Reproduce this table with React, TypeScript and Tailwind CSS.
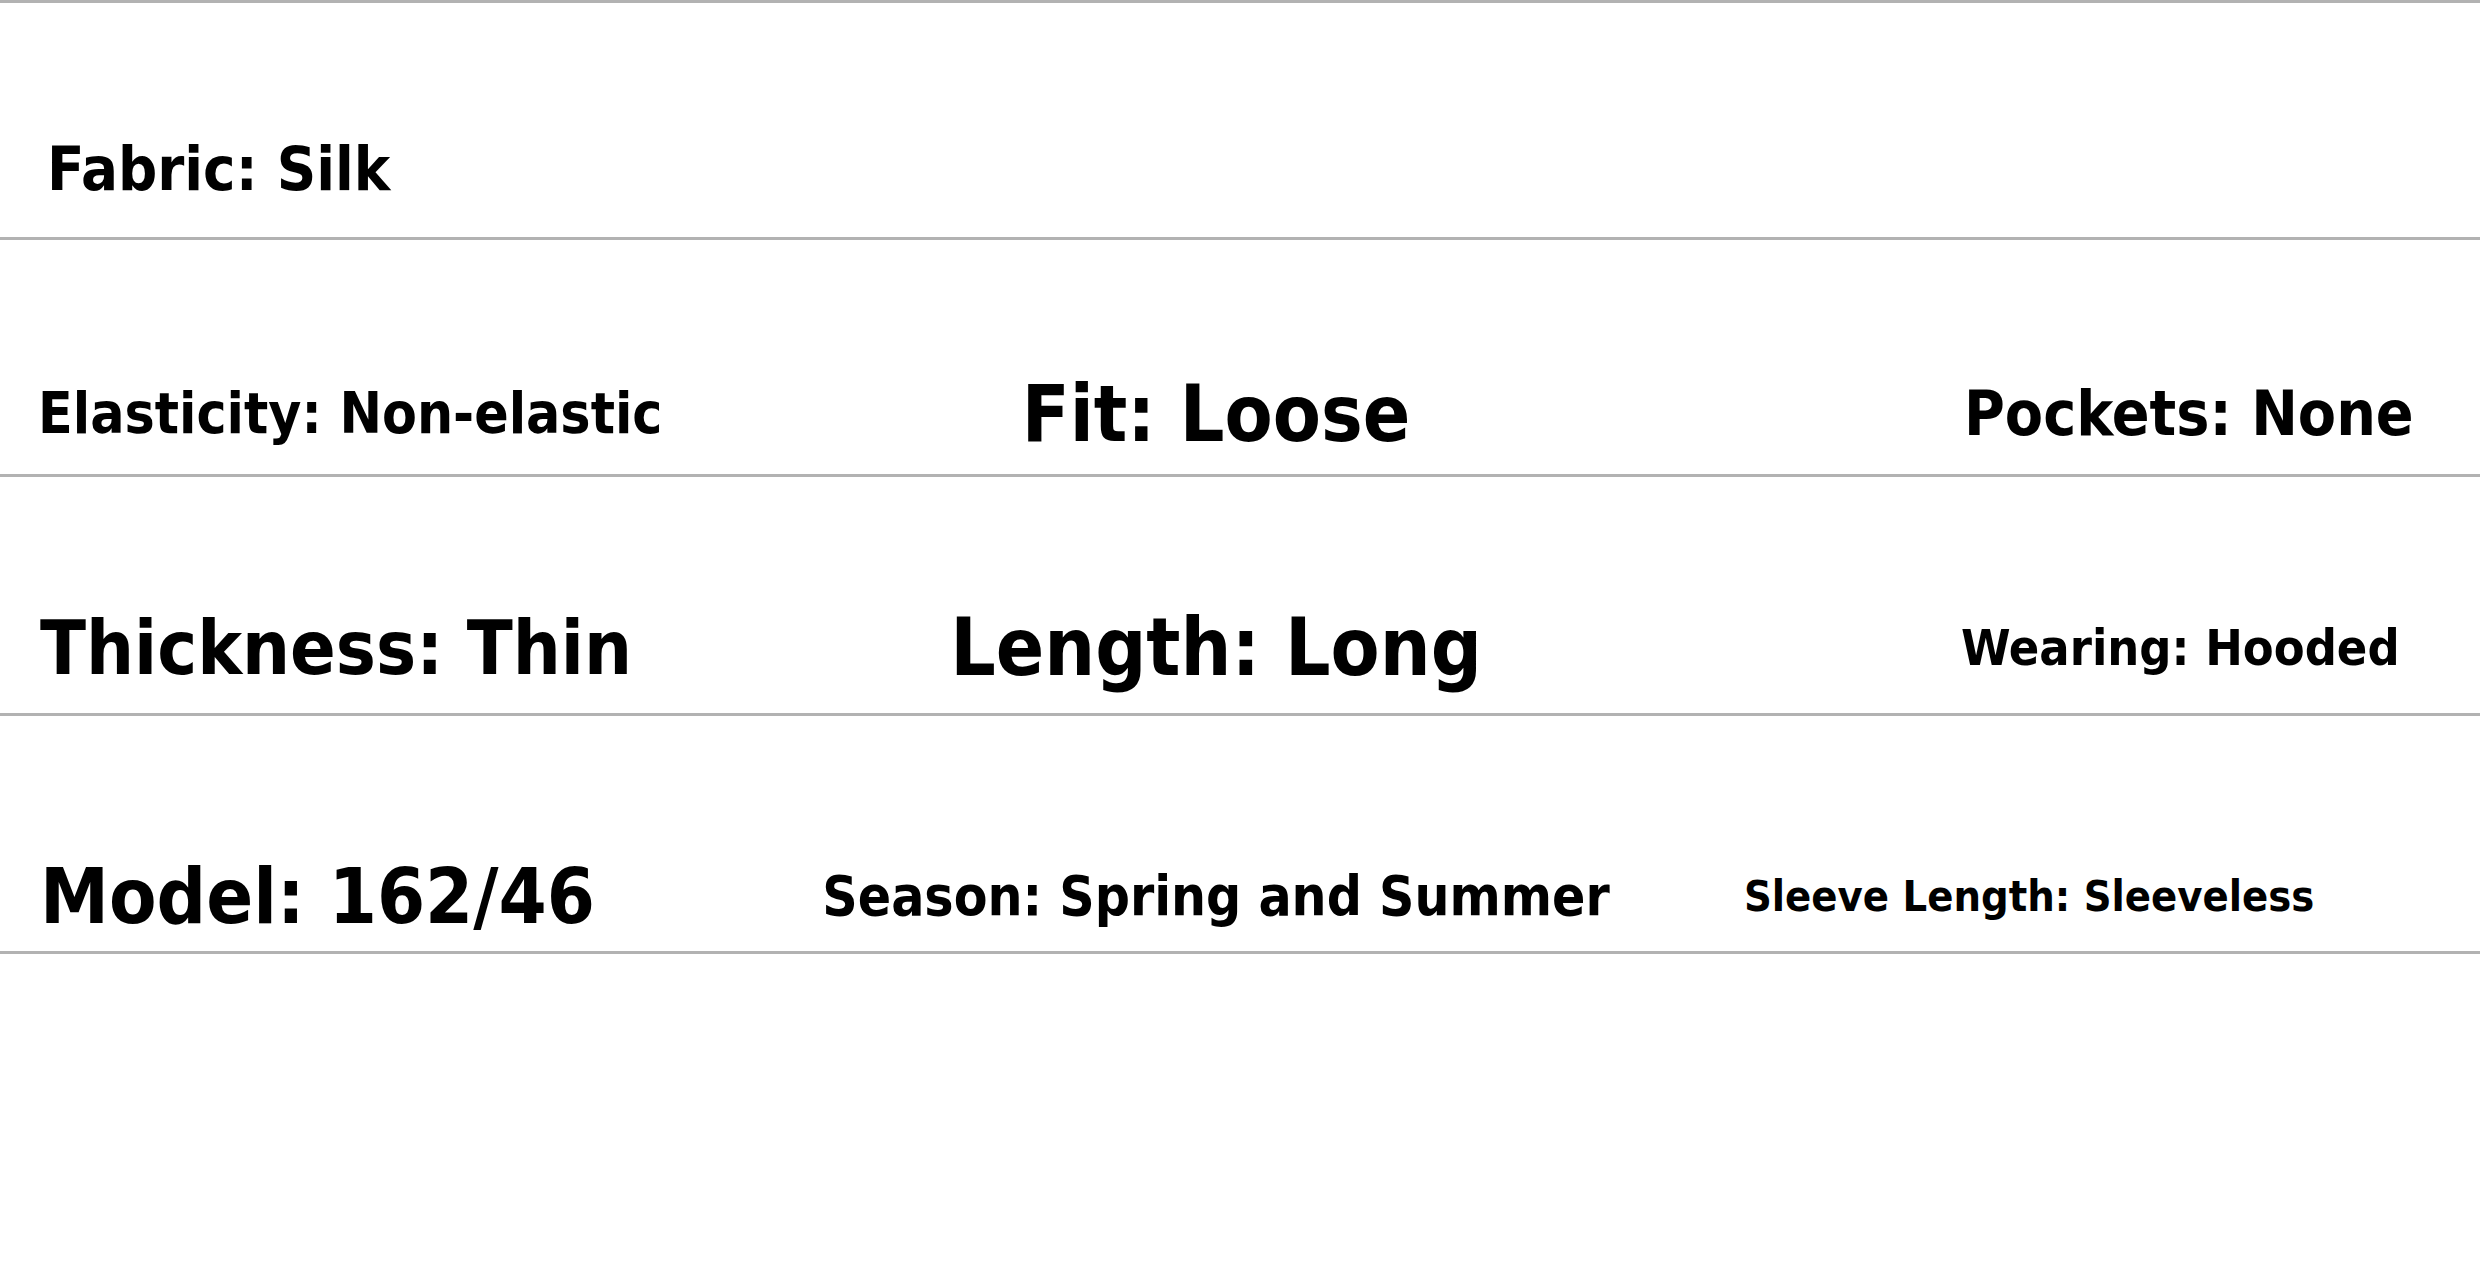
// Fiche produit : attributs du vêtement sur 4 rangées séparées par des filets gris.

type Attr = { label: string; value: string; size: string; pad?: string };

type Row = {
  height: string;
  pt: string;
  left?: Attr;
  middle?: Attr;
  right?: Attr;
};

const ROWS: Row[] = [
  {
    height: "h-[237px]",
    pt: "pt-[96px]",
    left: { label: "Fabric", value: "Silk", size: "text-[61px]", pad: "pl-[47px]" },
  },
  {
    height: "h-[237px]",
    pt: "pt-[114px]",
    left: { label: "Elasticity", value: "Non-elastic", size: "text-[56.5px]", pad: "pl-[38px]" },
    middle: { label: "Fit", value: "Loose", size: "text-[78px]" },
    right: { label: "Pockets", value: "None", size: "text-[62px]", pad: "pl-[352px]" },
  },
  {
    height: "h-[239px]",
    pt: "pt-[106px]",
    left: { label: "Thickness", value: "Thin", size: "text-[75px]", pad: "pl-[40px]" },
    middle: { label: "Length", value: "Long", size: "text-[79.5px]" },
    right: { label: "Wearing", value: "Hooded", size: "text-[50px]", pad: "pl-[349px]" },
  },
  {
    height: "h-[238px]",
    pt: "pt-[126px]",
    left: { label: "Model", value: "162/46", size: "text-[77px]", pad: "pl-[40px]" },
    middle: { label: "Season", value: "Spring and Summer", size: "text-[54.7px]" },
    right: { label: "Sleeve Length", value: "Sleeveless", size: "text-[43px]", pad: "pl-[132px]" },
  },
];

function AttrText({ a }: { a: Attr }) {
  return (
    <span className={"whitespace-nowrap font-bold leading-none text-black " + a.size}>
      {a.label}: {a.value}
    </span>
  );
}

export default function App() {
  return (
    <div
      className="min-h-[1284px] w-[2480px] bg-white font-stretch-condensed"
      style={{ fontFamily: '"DejaVu Sans Condensed", "DejaVu Sans", sans-serif' }}
    >
      <div className="border-t-[3px] border-[#b2b2b2]">
        {ROWS.map((r, i) => (
          <div
            key={i}
            className={
              "grid grid-cols-[820px_792px_1fr] items-center border-b-[3px] border-[#b2b2b2] " +
              r.height +
              " " +
              r.pt
            }
          >
            <div className={r.left?.pad}>{r.left ? <AttrText a={r.left} /> : null}</div>
            <div className="flex justify-center">{r.middle ? <AttrText a={r.middle} /> : null}</div>
            <div className={r.right?.pad}>{r.right ? <AttrText a={r.right} /> : null}</div>
          </div>
        ))}
      </div>
    </div>
  );
}
